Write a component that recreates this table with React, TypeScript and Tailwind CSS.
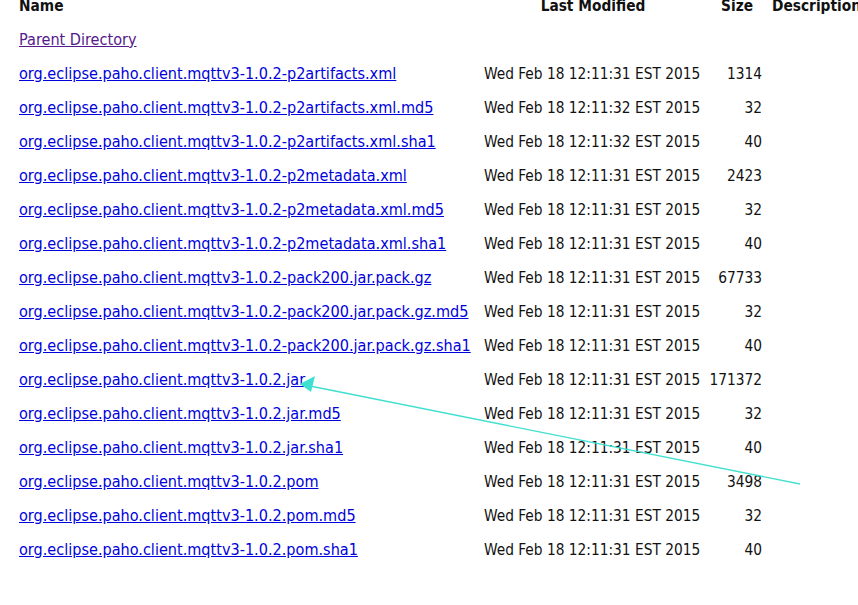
const FILES = [
  ["org.eclipse.paho.client.mqttv3-1.0.2-p2artifacts.xml", "Wed Feb 18 12:11:31 EST 2015", "1314"],
  ["org.eclipse.paho.client.mqttv3-1.0.2-p2artifacts.xml.md5", "Wed Feb 18 12:11:32 EST 2015", "32"],
  ["org.eclipse.paho.client.mqttv3-1.0.2-p2artifacts.xml.sha1", "Wed Feb 18 12:11:32 EST 2015", "40"],
  ["org.eclipse.paho.client.mqttv3-1.0.2-p2metadata.xml", "Wed Feb 18 12:11:31 EST 2015", "2423"],
  ["org.eclipse.paho.client.mqttv3-1.0.2-p2metadata.xml.md5", "Wed Feb 18 12:11:31 EST 2015", "32"],
  ["org.eclipse.paho.client.mqttv3-1.0.2-p2metadata.xml.sha1", "Wed Feb 18 12:11:31 EST 2015", "40"],
  ["org.eclipse.paho.client.mqttv3-1.0.2-pack200.jar.pack.gz", "Wed Feb 18 12:11:31 EST 2015", "67733"],
  ["org.eclipse.paho.client.mqttv3-1.0.2-pack200.jar.pack.gz.md5", "Wed Feb 18 12:11:31 EST 2015", "32"],
  ["org.eclipse.paho.client.mqttv3-1.0.2-pack200.jar.pack.gz.sha1", "Wed Feb 18 12:11:31 EST 2015", "40"],
  ["org.eclipse.paho.client.mqttv3-1.0.2.jar", "Wed Feb 18 12:11:31 EST 2015", "171372"],
  ["org.eclipse.paho.client.mqttv3-1.0.2.jar.md5", "Wed Feb 18 12:11:31 EST 2015", "32"],
  ["org.eclipse.paho.client.mqttv3-1.0.2.jar.sha1", "Wed Feb 18 12:11:31 EST 2015", "40"],
  ["org.eclipse.paho.client.mqttv3-1.0.2.pom", "Wed Feb 18 12:11:31 EST 2015", "3498"],
  ["org.eclipse.paho.client.mqttv3-1.0.2.pom.md5", "Wed Feb 18 12:11:31 EST 2015", "32"],
  ["org.eclipse.paho.client.mqttv3-1.0.2.pom.sha1", "Wed Feb 18 12:11:31 EST 2015", "40"],
];

export default function App() {
  return (
    <div className="relative h-[605px] w-[858px] overflow-hidden bg-white font-['DejaVu_Sans_Condensed','DejaVu_Sans',sans-serif] text-[15.3px] text-[#111]">
      <table className="-mt-[11px] ml-[19px] w-[839px] table-fixed border-collapse">
        <colgroup>
          <col className="w-[465px]" />
          <col className="w-[218px]" />
          <col className="w-[60px]" />
          <col />
        </colgroup>
        <thead>
          <tr className="h-[34px]">
            <th className="p-0 text-left font-bold">Name</th>
            <th className="p-0 text-center font-bold">Last Modified</th>
            <th className="p-0 pr-[9px] text-right font-bold">Size</th>
            <th className="whitespace-nowrap p-0 pl-[10px] text-left font-bold">Description</th>
          </tr>
        </thead>
        <tbody>
          <tr className="h-[34px]">
            <td className="p-0 text-[16.1px]">
              <a href="#" className="text-[#551a8b] underline">Parent Directory</a>
            </td>
            <td className="p-0"></td>
            <td className="p-0"></td>
            <td className="p-0"></td>
          </tr>
          {FILES.map(([name, date, size]) => (
            <tr key={name} className="h-[34px]">
              <td className="whitespace-nowrap p-0 text-[16.1px]">
                <a href="#" className="text-[#0000dd] underline">{name}</a>
              </td>
              <td className="whitespace-nowrap p-0">{date}</td>
              <td className="p-0 text-right">{size}</td>
              <td className="p-0"></td>
            </tr>
          ))}
        </tbody>
      </table>

      {/* annotation arrow */}
      <svg className="pointer-events-none absolute left-0 top-0" width="858" height="605">
        <line x1="800" y1="484" x2="310" y2="386" stroke="#40e0d0" strokeWidth="1.4" />
        <polygon points="300,384 315,376 311,392" fill="#40e0d0" />
      </svg>
    </div>
  );
}
